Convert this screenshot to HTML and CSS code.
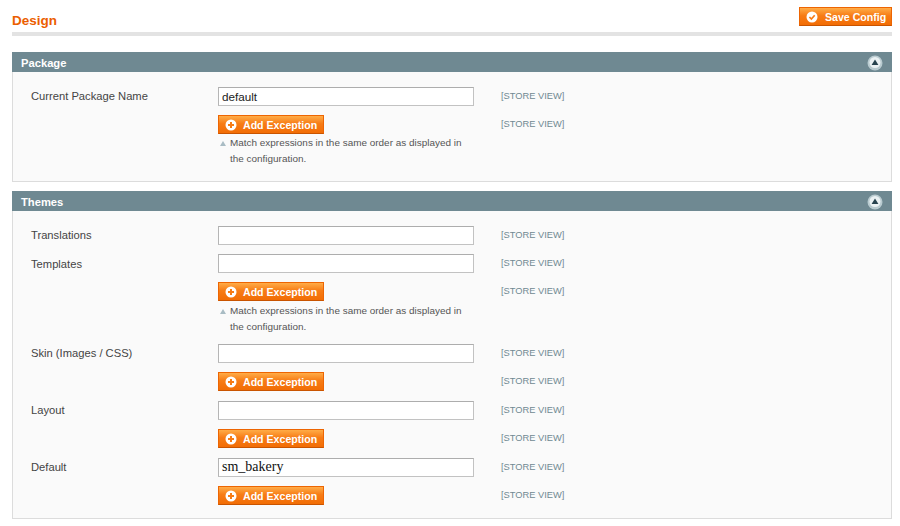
FILE: index.html
```html
<!DOCTYPE html>
<html>
<head>
<meta charset="utf-8">
<title>Design</title>
<link rel="stylesheet" href="styles.css">
</head>
<body>
<svg class="defs" width="0" height="0" aria-hidden="true">
  <symbol id="plus" viewBox="0 0 12 12"><circle cx="6" cy="6" r="5.5" fill="#fff"/><path d="M6 3v6M3 6h6" stroke="#f77c16" stroke-width="2" fill="none"/></symbol>
  <symbol id="check" viewBox="0 0 12 12"><circle cx="6" cy="6" r="5.5" fill="#fff"/><path d="M3.4 6l2 2 3.3-3.8" stroke="#f77c16" stroke-width="1.7" fill="none"/></symbol>
</svg>
<div class="page">
  <header class="head">
    <h1 class="title">Design</h1>
    <button class="btn btn-save"><svg class="ico"><use href="#check"/></svg>Save Config</button>
  </header>

  <section class="panel panel-a">
    <div class="bar"><span>Package</span><i class="toggle"><svg viewBox="0 0 16 16" width="16" height="16"><circle cx="8" cy="8" r="7.5" fill="#b9cbd0"/><circle cx="8" cy="7.5" r="5.5" fill="#eaf1f3"/><path d="M4.6 10L8 4.6 11.4 10z" fill="#27434f"/></svg></i></div>
    <div class="body body-a">
      <div class="row row-first"><label class="lbl">Current Package Name</label><div class="val"><input class="inp" value="default"></div><div class="scope">[STORE VIEW]</div></div>
      <div class="row row-note"><div class="lbl"></div><div class="val"><button class="btn btn-add"><svg class="ico"><use href="#plus"/></svg>Add Exception</button><p class="note">Match expressions in the same order as displayed in the configuration.</p></div><div class="scope">[STORE VIEW]</div></div>
    </div>
  </section>

  <section class="panel">
    <div class="bar"><span>Themes</span><i class="toggle"><svg viewBox="0 0 16 16" width="16" height="16"><circle cx="8" cy="8" r="7.5" fill="#b9cbd0"/><circle cx="8" cy="7.5" r="5.5" fill="#eaf1f3"/><path d="M4.6 10L8 4.6 11.4 10z" fill="#27434f"/></svg></i></div>
    <div class="body body-b">
      <div class="row row-tight"><label class="lbl">Translations</label><div class="val"><input class="inp"></div><div class="scope">[STORE VIEW]</div></div>
      <div class="row row-tight"><label class="lbl">Templates</label><div class="val"><input class="inp"></div><div class="scope">[STORE VIEW]</div></div>
      <div class="row row-note"><div class="lbl"></div><div class="val"><button class="btn btn-add"><svg class="ico"><use href="#plus"/></svg>Add Exception</button><p class="note">Match expressions in the same order as displayed in the configuration.</p></div><div class="scope">[STORE VIEW]</div></div>
      <div class="row"><label class="lbl">Skin (Images / CSS)</label><div class="val"><input class="inp"></div><div class="scope">[STORE VIEW]</div></div>
      <div class="row"><div class="lbl"></div><div class="val"><button class="btn btn-add"><svg class="ico"><use href="#plus"/></svg>Add Exception</button></div><div class="scope">[STORE VIEW]</div></div>
      <div class="row"><label class="lbl">Layout</label><div class="val"><input class="inp"></div><div class="scope">[STORE VIEW]</div></div>
      <div class="row"><div class="lbl"></div><div class="val"><button class="btn btn-add"><svg class="ico"><use href="#plus"/></svg>Add Exception</button></div><div class="scope">[STORE VIEW]</div></div>
      <div class="row"><label class="lbl">Default</label><div class="val"><input class="inp inp-serif" value="sm_bakery"></div><div class="scope">[STORE VIEW]</div></div>
      <div class="row"><div class="lbl"></div><div class="val"><button class="btn btn-add"><svg class="ico"><use href="#plus"/></svg>Add Exception</button></div><div class="scope">[STORE VIEW]</div></div>
    </div>
  </section>
</div>
</body>
</html>
```
FILE: styles.css
```css
* { box-sizing: border-box; }
html, body { margin: 0; padding: 0; background: #fff; }
body { font-family: "Liberation Sans", Arial, sans-serif; font-size: 11.2px; color: #444; overflow: hidden; }
.defs { position: absolute; }
.page { width: 900px; height: 526px; padding: 7px 8px 0 12px; }

.head { display: flex; justify-content: space-between; align-items: flex-start; height: 29px; border-bottom: 4px solid #e3e3e3; margin-bottom: 16px; }
.title { margin: 6.5px 0 0; font-size: 13.5px; line-height: 14px; font-weight: bold; color: #eb5e00; }

.btn { display: flex; align-items: center; height: 19px; padding: 0; border: 1px solid #ed6502; border-bottom-color: #c95400; background: linear-gradient(#ffac47, #f77c16 45%, #f26d05); color: #fff; font-family: inherit; font-size: 10.6px; font-weight: bold; white-space: nowrap; }
.ico { width: 12px; height: 12px; flex: none; }
.btn-save { width: 93px; padding-left: 6px; }
.btn-save .ico { margin-right: 7px; }
.btn-add { width: 106px; padding-left: 6px; }
.btn-add .ico { margin-right: 6px; }

.panel { margin-bottom: 10px; }
.panel-a { margin-bottom: 9px; }
.bar { display: flex; justify-content: space-between; align-items: center; height: 20px; padding: 1px 9px 0; background: #6f8992; color: #fff; font-weight: bold; font-size: 11.2px; }
.toggle { display: block; width: 16px; height: 16px; margin-right: 0; }
.toggle svg { display: block; }
.body { border: 1px solid #dcdcdc; border-top: 0; background: #fafafa; padding-left: 18px; }
.body-a { height: 110px; padding-top: 15px; }
.body-b { height: 308px; padding-top: 14.9px; }

.row { display: grid; grid-template-columns: 187px 256px 1fr; height: 28.5px; }
.row-first { height: 28px; }
.row-tight { height: 28.2px; }
.row-note { height: 61.6px; }
.lbl { padding-top: 3.6px; line-height: 13px; font-size: 11.2px; color: #444; }
.row-first .lbl { padding-top: 2.6px; }
.val { min-width: 0; }
.scope { padding: 2.8px 0 0 27px; font-size: 9.3px; line-height: 13px; color: #6f8992; }

.inp { display: block; width: 256px; height: 19px; padding: 0 3px; border: 1px solid #c2c2c2; border-top-color: #adadad; border-left-color: #b5b5b5; background: #fff; font-family: inherit; font-size: 11.7px; color: #222; outline: 0; border-radius: 0; }
.inp-serif { font-family: "Liberation Serif", "Times New Roman", serif; font-size: 14px; color: #111; }

.note { position: relative; margin: 1.4px 0 0; padding: 0 0 0 12px; width: 256px; font-size: 9.95px; line-height: 16px; color: #555; }
.row-note .val { display: flex; flex-direction: column; }
.note::before { content: ""; position: absolute; left: 2px; top: 6px; border-left: 3px solid transparent; border-right: 3px solid transparent; border-bottom: 5px solid #a9bcc4; }
```
